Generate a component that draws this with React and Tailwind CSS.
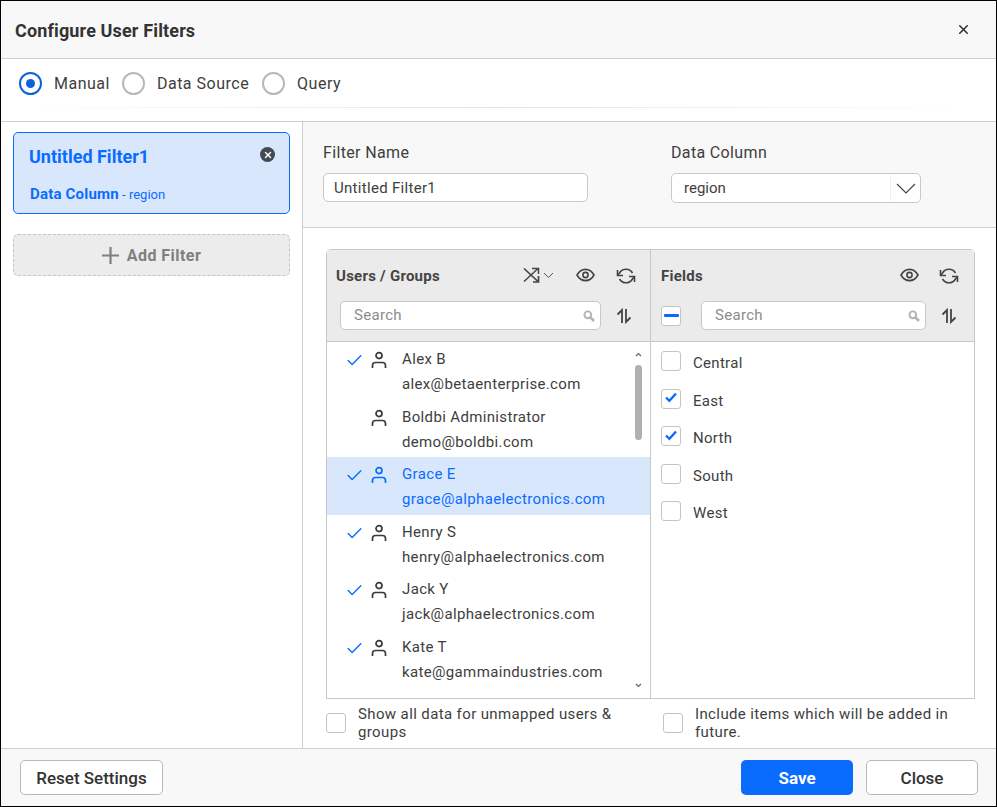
import React from 'react';
import { Check, X } from 'lucide-react';

const users = [
  { name: 'Alex B', email: 'alex@betaenterprise.com', on: true },
  { name: 'Boldbi Administrator', email: 'demo@boldbi.com', on: false },
  { name: 'Grace E', email: 'grace@alphaelectronics.com', on: true, active: true },
  { name: 'Henry S', email: 'henry@alphaelectronics.com', on: true },
  { name: 'Jack Y', email: 'jack@alphaelectronics.com', on: true },
  { name: 'Kate T', email: 'kate@gammaindustries.com', on: true },
];

const fields = [
  { name: 'Central', on: false },
  { name: 'East', on: true },
  { name: 'North', on: true },
  { name: 'South', on: false },
  { name: 'West', on: false },
];

function Radio({ label, on, className }) {
  return (
    <div className={`flex items-center ${className || ''}`}>
      <div className={`w-[23px] h-[23px] rounded-full border-2 flex items-center justify-center ${on ? 'border-[#0f62d6]' : 'border-[#b8b8b8]'}`}>
        {on && <div className="w-[9px] h-[9px] rounded-full bg-[#0f62d6]" />}
      </div>
      <span className="ml-[12px] pt-px text-base tracking-[0.5px] text-[#3e3e3e]">{label}</span>
    </div>
  );
}

function SortIcon() {
  return (
    <svg width="16" height="16" viewBox="0 0 16 16" fill="none" stroke="#444" strokeWidth="1.8">
      <path d="M6 15V2L1.5 6.5" />
      <path d="M10 1V14L14.5 9.5" />
    </svg>
  );
}

function EyeIcon({ className }) {
  return (
    <svg width="19" height="14" viewBox="0 0 19 14" fill="none" stroke="#444" strokeWidth="1.6" className={className}>
      <path d="M1 7C3 3.4 6 1.4 9.5 1.4S16 3.4 18 7C16 10.6 13 12.6 9.5 12.6S3 10.6 1 7Z" />
      <circle cx="9.5" cy="7" r="2.6" />
    </svg>
  );
}

function SyncIcon({ className }) {
  return (
    <svg width="20" height="18" viewBox="0 0 20 18" fill="none" stroke="#444" strokeWidth="1.6" className={className}>
      <path d="M16.5 6A7.5 7.5 0 0 0 3.5 6L1.5 8.5" />
      <path d="M1.5 3V8.5H7" />
      <path d="M3.5 12A7.5 7.5 0 0 0 16.5 12L18.5 9.5" />
      <path d="M18.5 15V9.5H13" />
    </svg>
  );
}

function ShuffleIcon() {
  return (
    <svg width="18" height="18" viewBox="0 0 18 18" fill="none" stroke="#444" strokeWidth="1.5" className="mb-[2px]">
      <path d="M1 15.5L15 2.5" />
      <path d="M9 2.5H15.5V8" />
      <path d="M1 2.5L15 15.5" strokeWidth="1.7" />
      <path d="M15.5 10V16H10" strokeWidth="1.7" />
    </svg>
  );
}

function PersonIcon({ active }) {
  return (
    <svg width="16" height="18" viewBox="0 0 16 18" fill="none" stroke={active ? '#0a6cff' : '#3a3a3a'} strokeWidth="1.7">
      <circle cx="8" cy="4.6" r="3" />
      <path d="M1.5 17V14.5C1.5 12.8 2.8 11.5 4.5 11.5H11.5C13.2 11.5 14.5 12.8 14.5 14.5V17" />
    </svg>
  );
}

function SearchIcon() {
  return (
    <svg width="12" height="12" viewBox="0 0 12 12" fill="none" stroke="#b3b3b3">
      <circle cx="4.8" cy="4.8" r="3.4" strokeWidth="1.9" />
      <path d="M7.4 7.4L11 11" strokeWidth="2.6" />
    </svg>
  );
}

function SearchBox({ className }) {
  return (
    <div className={`h-[29px] bg-white border border-[#c8c8c8] rounded-[5px] flex items-center justify-between pl-[13px] pr-[5px] ${className}`}>
      <span className="text-[15px] leading-[18px] pb-[2px] tracking-[0.3px] text-[#8c8c8c]">Search</span>
      <SearchIcon />
    </div>
  );
}

function CheckBox({ on }) {
  return (
    <div className="w-5 h-5 shrink-0 bg-white border border-[#c4c4c4] rounded-[3px] flex items-center justify-center">
      {on && (
        <svg width="12" height="11" viewBox="0 0 12 11" fill="none" stroke="#0a6cff" strokeWidth="2.4" className="mb-[2px]">
          <path d="M1 5.5L4.4 8.8L11 1.5" />
        </svg>
      )}
    </div>
  );
}

export default function App() {
  return (
    <div className="w-[997px] h-[807px] bg-white border border-black flex flex-col overflow-hidden font-['Roboto',sans-serif] text-[#3e3e3e]">
      <div className="h-[58px] shrink-0 bg-[#f8f8f8] border-b border-[#cfcfcf] flex items-center justify-between pl-[14px] pr-[25px]">
        <h1 className="pt-[2px] text-lg tracking-[0.14px] font-bold text-[#333]">Configure User Filters</h1>
        <X size={15} strokeWidth={2.5} className="text-[#333]" />
      </div>

      <div className="h-[63px] shrink-0 border-b border-[#cfcfcf] px-[18px] relative">
        <div className="h-[49px] flex items-center gap-[12px]">
          <Radio label="Manual" on />
          <Radio label="Data Source" />
          <Radio label="Query" className="ml-px" />
        </div>
        <div className="absolute left-[18px] right-[24px] top-[48px] h-px bg-gradient-to-r from-white via-[#e4e4e4] to-white" />
      </div>

      <div className="flex-1 flex min-h-0">
        <div className="w-[302px] shrink-0 border-r border-[#cfcfcf] pt-[10px] pl-[12px] pr-[12px]">
          <div className="relative h-[82px] bg-[#d9e7fd] border border-[#0a6cff] rounded-[5px] text-[#0a6cff] pl-[15px]">
            <div className="pt-[13px] text-lg font-bold leading-[22px]">Untitled Filter1</div>
            <div className="pt-[17px] leading-[18px] pl-px">
              <span className="text-[15px] font-bold tracking-[0.2px]">Data Column</span>
              <span className="text-[13px]"> - region</span>
            </div>
            <div className="absolute right-[14px] top-[14px] w-[15px] h-[15px] rounded-full bg-[#454a52] flex items-center justify-center">
              <X size={10} strokeWidth={3.5} className="text-white" />
            </div>
          </div>
          <div className="mt-[20px] h-[42px] bg-[#ececec] border border-dashed border-[#c4c4c4] rounded-[5px] flex items-center justify-center text-[#7f7f7f] font-bold text-base tracking-[0.45px]">
            <svg width="17" height="17" viewBox="0 0 17 17" fill="none" stroke="#7f7f7f" strokeWidth="2.2" className="mr-[8px]">
              <path d="M8.5 0V17M0 8.5H17" />
            </svg>
            <span className="pt-px">Add Filter</span>
          </div>
        </div>

        <div className="flex-1 min-w-0 flex flex-col">
          <div className="h-[106px] shrink-0 bg-[#f8f8f8] border-b border-[#cfcfcf] flex pl-[20px] pt-[21px]">
            <div className="w-[348px]">
              <div className="text-base tracking-[0.35px] leading-[18px] pt-px">Filter Name</div>
              <div className="mt-[11px] w-[265px] h-[29px] bg-white border border-[#c8c8c8] rounded-[5px] flex items-center pl-[10px] pt-[2px] text-[15px] tracking-[0.3px]">
                Untitled Filter1
              </div>
            </div>
            <div>
              <div className="text-base tracking-[0.35px] leading-[18px] pt-px">Data Column</div>
              <div className="mt-[11px] w-[250px] h-[30px] bg-white border border-[#c8c8c8] rounded-[5px] flex items-center text-[15px]">
                <span className="flex-1 pl-[12px]">region</span>
                <div className="w-[30px] h-full border-l border-[#f0f0f0] flex items-center justify-center">
                  <svg width="20" height="11" viewBox="0 0 20 11" fill="none" stroke="#444" strokeWidth="1.2">
                    <path d="M1 1L10 10L19 1" />
                  </svg>
                </div>
              </div>
            </div>
          </div>

          <div className="flex-1 min-h-0 pl-[23px] pr-[21px] pt-[21px]">
            <div className="h-[450px] border border-[#c8c8c8] rounded-t-[5px] flex">
              <div className="w-[324px] shrink-0 border-r border-[#c8c8c8] flex flex-col">
                <div className="h-[92px] shrink-0 bg-[#ebebeb] border-b border-[#c8c8c8]">
                  <div className="h-[51px] flex items-center pl-[9px] pr-[14px]">
                    <span className="pt-[2px] text-[15px] tracking-[0.25px] font-bold text-[#444] flex-1">Users / Groups</span>
                    <ShuffleIcon />
                    <svg width="11" height="7" viewBox="0 0 11 7" fill="none" stroke="#555" strokeWidth="1" className="ml-[2px]">
                      <path d="M1 1L5.5 5.5L10 1" />
                    </svg>
                    <EyeIcon className="ml-[22px] mb-[2px]" />
                    <SyncIcon className="ml-[21px]" />
                  </div>
                  <div className="flex items-center pl-[13px]">
                    <SearchBox className="w-[261px]" />
                    <div className="ml-[15px]"><SortIcon /></div>
                  </div>
                </div>
                <div className="flex-1 min-h-0 relative overflow-hidden">
                  {users.map((u) => (
                    <div key={u.email} className={`h-[57.5px] flex ${u.active ? 'bg-[#d9e7fd] text-[#0a6cff]' : ''}`}>
                      <div className="w-[18px] ml-[18px] pt-[9px]">
                        {u.on && <Check size={19} strokeWidth={1.8} className="text-[#0a6cff]" />}
                      </div>
                      <div className="w-[16px] ml-[8px] pt-[9px]">
                        <PersonIcon active={u.active} />
                      </div>
                      <div className="ml-[15px] text-[15px] tracking-[0.35px]">
                        <div className="leading-[18px] pt-[8px]">{u.name}</div>
                        <div className="leading-[18px] pt-[7px]">{u.email}</div>
                      </div>
                    </div>
                  ))}
                  <svg width="7" height="5" viewBox="0 0 7 5" fill="none" stroke="#666" strokeWidth="1.2" className="absolute right-[8px] top-[10px]">
                    <path d="M1 4L3.5 1.5L6 4" />
                  </svg>
                  <div className="absolute right-[8px] top-[23px] w-[7px] h-[75px] rounded bg-[#b0b0b0]" />
                  <svg width="7" height="5" viewBox="0 0 7 5" fill="none" stroke="#666" strokeWidth="1.2" className="absolute right-[8px] bottom-[10px]">
                    <path d="M1 1L3.5 3.5L6 1" />
                  </svg>
                </div>
              </div>

              <div className="flex-1 min-w-0 flex flex-col">
                <div className="h-[92px] shrink-0 bg-[#ebebeb] border-b border-[#c8c8c8]">
                  <div className="h-[51px] flex items-center pl-[10px] pr-[15px]">
                    <span className="pt-[2px] text-[15px] tracking-[0.25px] font-bold text-[#444] flex-1">Fields</span>
                    <EyeIcon className="mb-[2px]" />
                    <SyncIcon className="ml-[20px]" />
                  </div>
                  <div className="flex items-center pl-[10px]">
                    <div className="w-5 h-5 shrink-0 bg-white border border-[#c4c4c4] rounded-[3px] flex items-center justify-center">
                      <div className="w-[15px] h-[3px] rounded-[1px] bg-[#0a6cff]" />
                    </div>
                    <SearchBox className="w-[225px] ml-[20px]" />
                    <div className="ml-[15px]"><SortIcon /></div>
                  </div>
                </div>
                <div className="pl-[10px] pt-[9px]">
                  {fields.map((f) => (
                    <div key={f.name} className="h-[37.5px] flex items-start">
                      <CheckBox on={f.on} />
                      <span className="ml-[12px] text-[15px] tracking-[0.3px] leading-[18px] pt-[3px]">{f.name}</span>
                    </div>
                  ))}
                </div>
              </div>
            </div>

            <div className="flex mt-[6px] text-[15px] tracking-[0.38px] leading-[18px]">
              <div className="w-[337px] flex items-center">
                <CheckBox />
                <span className="ml-[12px] w-[275px]">Show all data for unmapped users &amp; groups</span>
              </div>
              <div className="flex items-center ml-[5px]">
                <CheckBox />
                <span className="ml-[12px] w-[280px]">Include items which will be added in future.</span>
              </div>
            </div>
          </div>
        </div>
      </div>

      <div className="h-[58px] shrink-0 bg-[#f8f8f8] border-t border-[#cfcfcf] flex items-center pl-[19px] pr-[18px]">
        <button className="h-[35px] w-[143px] pt-[3px] bg-white border border-[#b8b8b8] rounded-[5px] text-[17px] font-medium text-[#333]">Reset Settings</button>
        <button className="ml-auto w-[112px] h-[35px] pt-[3px] bg-[#0a6cff] rounded-[5px] text-[17px] font-bold text-white">Save</button>
        <button className="ml-[13px] w-[112px] h-[35px] pt-[3px] bg-white border border-[#b8b8b8] rounded-[5px] text-[17px] font-medium text-[#333]">Close</button>
      </div>
    </div>
  );
}
